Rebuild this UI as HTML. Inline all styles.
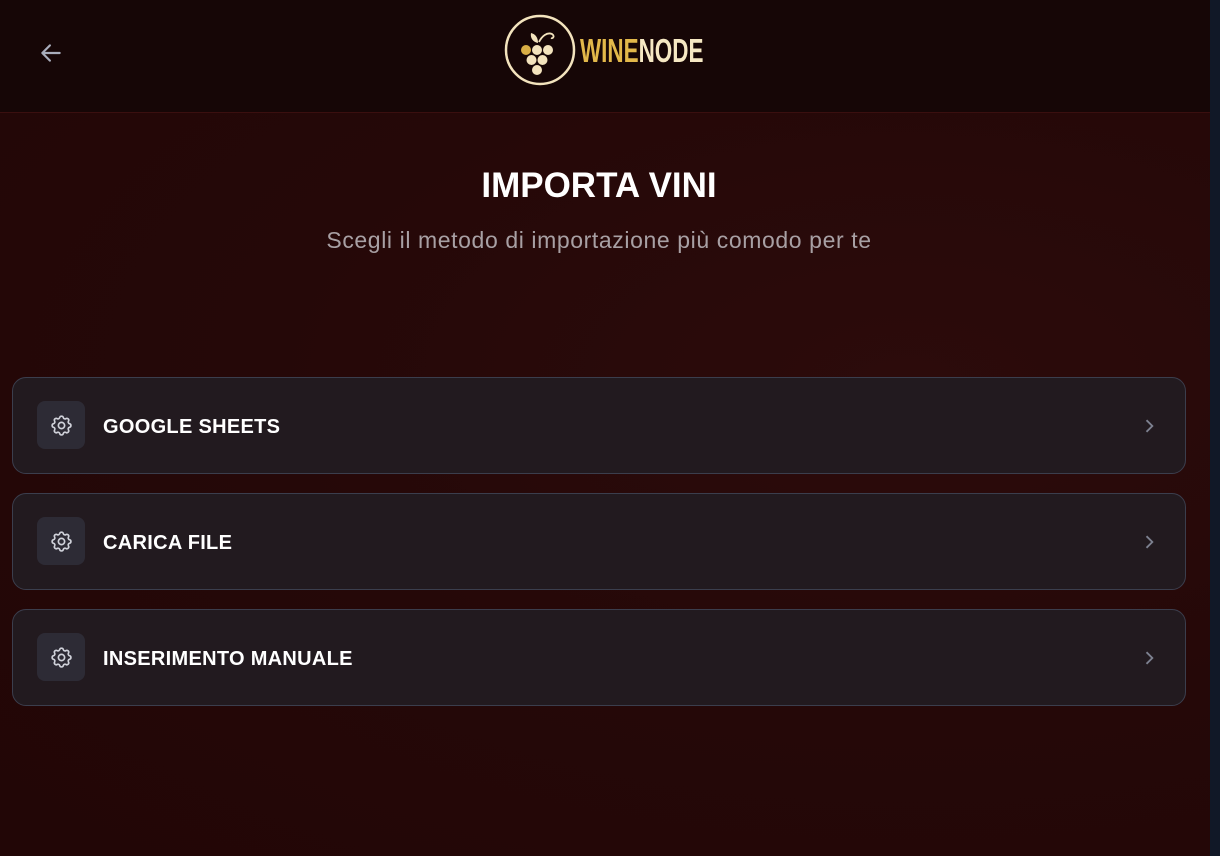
<!DOCTYPE html>
<html><head><style>
*{margin:0;padding:0;box-sizing:border-box}
body{width:1220px;height:856px;overflow:hidden;background:#250707;font-family:"Liberation Sans",sans-serif;position:relative}
.main{position:absolute;left:0;top:0;width:1210px;height:856px;background:radial-gradient(ellipse at 75% 45%,#2c0b0b 0%,#250808 50%,#220606 100%)}
.strip{position:absolute;left:1210px;top:0;width:10px;height:856px;background:#111827}
.hdr{position:absolute;left:0;top:0;width:1210px;height:113px;background:#160606;border-bottom:1px solid #3a0f0f}
.back{position:absolute;left:38px;top:40px}
.logo{position:absolute;left:504px;top:13px}
.wn{position:absolute;left:580px;top:33px;font-size:33px;line-height:36px;font-weight:bold;transform:scaleX(.68);transform-origin:left;white-space:nowrap}
h1{position:absolute;top:166px;width:1198px;text-align:center;color:#fff;font-size:35px;font-weight:bold}
.sub{position:absolute;top:227px;width:1198px;text-align:center;color:#a8a0a4;font-size:23px;letter-spacing:.6px}
.card{position:absolute;left:12px;width:1174px;height:97px;background:#221a1f;border:1px solid #3b3e4d;border-radius:14px}
.ic{position:absolute;left:24px;top:23px;width:48px;height:48px;background:#2d2b35;border-radius:8px;display:flex;align-items:center;justify-content:center}
.t{position:absolute;left:90px;top:38px;color:#fff;font-weight:bold;font-size:20px;letter-spacing:.3px}
.ch{position:absolute;right:26px;top:38px}
</style></head><body>
<div class="main"></div><div class="strip"></div>
<div class="hdr">
<svg class="back" width="26" height="26" viewBox="0 0 24 24" fill="none" stroke="#a9adbb" stroke-width="2" stroke-linecap="round" stroke-linejoin="round"><path d="M20 12H4M11 5l-7 7 7 7"/></svg>
<svg class="logo" width="74" height="74" viewBox="0 0 74 74">
<circle cx="36" cy="37" r="34" fill="none" stroke="#f3e3bd" stroke-width="2.5"/>
<path d="M34 30c-5-1-8-5-7-10 4 1 7 4 7 10z" fill="#f3e3bd"/>
<path d="M35 29c3-6 8-10 13-8 3 2 1 5-1 4" fill="none" stroke="#f3e3bd" stroke-width="1.8"/>
<circle cx="22" cy="37" r="5" fill="#d9ae45"/><circle cx="33" cy="37" r="5" fill="#f3e3bd"/><circle cx="44" cy="37" r="5" fill="#f3e3bd"/>
<circle cx="27.5" cy="47" r="5" fill="#f3e3bd"/><circle cx="38.5" cy="47" r="5" fill="#f3e3bd"/>
<circle cx="33" cy="57" r="5" fill="#f3e3bd"/>
</svg>
<div class="wn"><span style="color:#e2b84a">WINE</span><span style="color:#f6e8c3">NODE</span></div>
</div>
<h1>IMPORTA VINI</h1>
<div class="sub">Scegli il metodo di importazione più comodo per te</div>
<div class="card" style="top:377px"><div class="ic"><svg width="25" height="25" viewBox="0 0 24 24" fill="none" stroke="#d0d2da" stroke-width="1.6"><path d="M10.3 4.3c.4-1.7 3-1.7 3.4 0a1.7 1.7 0 0 0 2.6 1.1c1.5-.9 3.3.8 2.4 2.4a1.7 1.7 0 0 0 1 2.5c1.8.4 1.8 3 0 3.4a1.7 1.7 0 0 0-1 2.6c.9 1.5-.9 3.300-2.4 2.4a1.7 1.7 0 0 0-2.6 1c-.4 1.8-3 1.8-3.4 0a1.7 1.7 0 0 0-2.5-1c-1.6.9-3.3-.9-2.4-2.4a1.7 1.7 0 0 0-1.1-2.6c-1.7-.4-1.7-3 0-3.4a1.7 1.7 0 0 0 1.1-2.5c-.9-1.6.8-3.3 2.4-2.4a1.7 1.7 0 0 0 2.5-1.1z"/><circle cx="12" cy="12" r="3"/></svg></div><div class="t">GOOGLE SHEETS</div><svg class="ch" width="20" height="20" viewBox="0 0 24 24" fill="none" stroke="#7d8190" stroke-width="2.2"><path d="M9 5l7 7-7 7"/></svg></div>
<div class="card" style="top:493px"><div class="ic"><svg width="25" height="25" viewBox="0 0 24 24" fill="none" stroke="#d0d2da" stroke-width="1.6"><path d="M10.3 4.3c.4-1.7 3-1.7 3.4 0a1.7 1.7 0 0 0 2.6 1.1c1.5-.9 3.3.8 2.4 2.4a1.7 1.7 0 0 0 1 2.5c1.8.4 1.8 3 0 3.4a1.7 1.7 0 0 0-1 2.6c.9 1.5-.9 3.3-2.4 2.4a1.7 1.7 0 0 0-2.6 1c-.4 1.8-3 1.8-3.4 0a1.7 1.7 0 0 0-2.5-1c-1.6.9-3.3-.9-2.4-2.4a1.7 1.7 0 0 0-1.1-2.6c-1.7-.4-1.7-3 0-3.4a1.7 1.7 0 0 0 1.1-2.5c-.9-1.6.8-3.3 2.4-2.4a1.7 1.7 0 0 0 2.5-1.1z"/><circle cx="12" cy="12" r="3"/></svg></div><div class="t">CARICA FILE</div><svg class="ch" width="20" height="20" viewBox="0 0 24 24" fill="none" stroke="#7d8190" stroke-width="2.2"><path d="M9 5l7 7-7 7"/></svg></div>
<div class="card" style="top:609px"><div class="ic"><svg width="25" height="25" viewBox="0 0 24 24" fill="none" stroke="#d0d2da" stroke-width="1.6"><path d="M10.3 4.3c.4-1.7 3-1.7 3.4 0a1.7 1.7 0 0 0 2.6 1.1c1.5-.9 3.3.8 2.4 2.4a1.7 1.7 0 0 0 1 2.5c1.8.4 1.8 3 0 3.4a1.7 1.7 0 0 0-1 2.6c.9 1.5-.9 3.3-2.4 2.4a1.7 1.7 0 0 0-2.6 1c-.4 1.8-3 1.8-3.4 0a1.7 1.7 0 0 0-2.5-1c-1.6.9-3.3-.9-2.4-2.4a1.7 1.7 0 0 0-1.1-2.6c-1.7-.4-1.7-3 0-3.4a1.7 1.7 0 0 0 1.1-2.5c-.9-1.6.8-3.3 2.4-2.4a1.7 1.7 0 0 0 2.5-1.1z"/><circle cx="12" cy="12" r="3"/></svg></div><div class="t">INSERIMENTO MANUALE</div><svg class="ch" width="20" height="20" viewBox="0 0 24 24" fill="none" stroke="#7d8190" stroke-width="2.2"><path d="M9 5l7 7-7 7"/></svg></div>
</body></html>
